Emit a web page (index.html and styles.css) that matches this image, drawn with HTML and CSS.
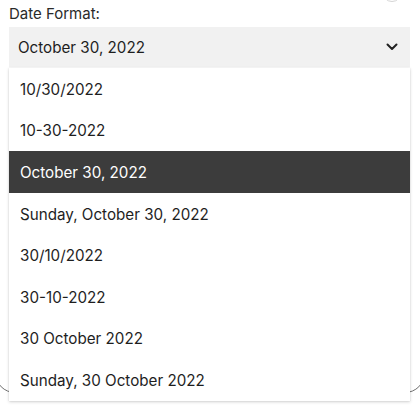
FILE: index.html
```html
<!DOCTYPE html>
<html>
<head>
<meta charset="utf-8">
<link rel="stylesheet" href="styles.css">
</head>
<body>
<div class="page">
  <div class="bg-card"></div>
  <div class="bg-knob"></div>
  <div class="field">
    <div class="label">Date Format:</div>
    <div class="select">
      <span class="select-value">October 30, 2022</span>
      <svg class="chevron" width="12" height="8" viewBox="0 0 12 8"><path d="M1.5 1.5 L6 6 L10.5 1.5" fill="none" stroke="#222" stroke-width="2" stroke-linecap="round" stroke-linejoin="round"/></svg>
    </div>
    <ul class="menu">
      <li class="item">10/30/2022</li>
      <li class="item">10-30-2022</li>
      <li class="item selected">October 30, 2022</li>
      <li class="item">Sunday, October 30, 2022</li>
      <li class="item">30/10/2022</li>
      <li class="item">30-10-2022</li>
      <li class="item">30 October 2022</li>
      <li class="item">Sunday, 30 October 2022</li>
    </ul>
  </div>
</div>
</body>
</html>
```
FILE: styles.css
```css
* { box-sizing: border-box; }
html, body { margin: 0; padding: 0; background: #fff; }
body { font-family: "Inter", "Liberation Sans", sans-serif; color: #222; }
.page {
  position: relative;
  width: 420px;
  height: 411px;
  overflow: hidden;
  padding: 3px 10px 0 9px;
}
.bg-card {
  position: absolute;
  left: -5px;
  right: -5px;
  top: -60px;
  bottom: 18px;
  border: 1.5px solid #6f6f6f;
  border-radius: 20px;
}
.bg-knob {
  position: absolute;
  left: 382px;
  top: -18px;
  width: 20px;
  height: 20px;
  border-radius: 50%;
  border: 1.5px solid #d4d4d4;
  background: #fff;
}
.field { position: relative; display: flex; flex-direction: column; }
.label {
  font-size: 15px;
  line-height: 21px;
  height: 24px;
  color: #2a2a2a;
}
.select {
  height: 40px;
  background: #f1f1f1;
  display: flex;
  align-items: center;
  justify-content: space-between;
  padding: 0 12px 0 9px;
  font-size: 15.2px;
  color: #1e1e1e;
}
.chevron { display: block; }
.menu {
  list-style: none;
  margin: 1px 0 0;
  padding: 0;
  background: #fff;
  box-shadow: 0 1px 3px rgba(0,0,0,0.18), 0 0 1px rgba(0,0,0,0.12);
}
.item {
  height: 41.6px;
  display: flex;
  align-items: center;
  padding: 1px 11px 0;
  font-size: 15.2px;
  color: #1e1e1e;
}
.item.selected { background: #3c3c3c; color: #fff; }
```
